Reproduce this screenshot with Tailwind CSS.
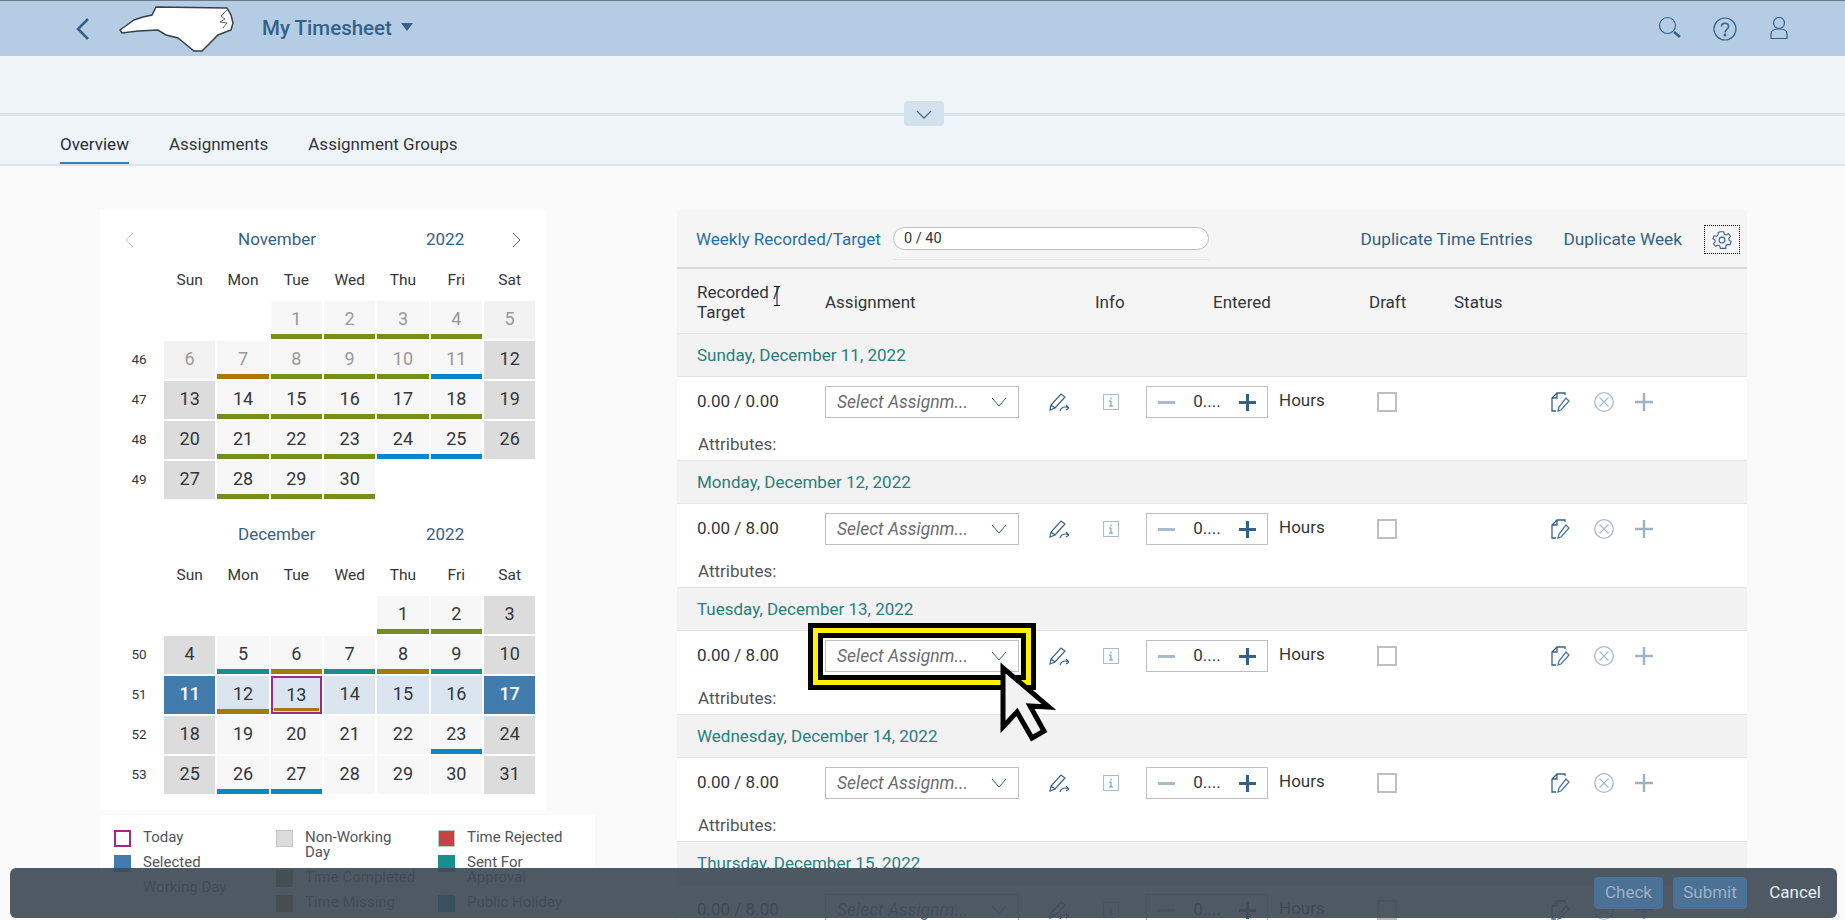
<!doctype html>
<html><head><meta charset="utf-8"><script src="https://cdn.jsdelivr.net/npm/@tailwindcss/browser@4"></script></head>
<body class="h-[920px] overflow-hidden relative bg-[#fafafa] text-[#32363a] font-['Roboto',sans-serif] text-[17px]">
<header class="h-14 bg-[#b4cce4] border-t border-[#6b7b88] flex items-center relative">
<svg class="ml-[75px] w-4 h-6" viewBox="0 0 16 24" fill="none" stroke="#346187" stroke-width="2.500"><path d="M13 2 3 12l10 10"/></svg>
<svg class="ml-[27px] w-[116px] h-[48px]" viewBox="118 5 116 48" fill="#fff" stroke="#3a3f44" stroke-width="1.500"><path d="M120 30l7-5 7-5 9-3 9-2 4-8 71 1 4 7 2 8-2 7-13 5-8 8-8 8h-8l-16-13-12-3-8-5-20 1-16 2z"/><path stroke-width=".8" fill="none" d="M227 10l-6 6 4 3-5 3 7 1-4 5"/></svg>
<span class="ml-[28px] -mt-[1px] text-[20.5px] font-medium text-[#346187]">My Timesheet</span>
<svg class="ml-[9px] -mt-[3px] w-3 h-2" viewBox="0 0 12 8" fill="#346187"><path d="M0 0h12L6 8z"/></svg>
<div class="ml-auto mr-[54px] flex items-center">
<svg class="w-6 h-6 -mt-[1px]" viewBox="0 0 24 24" fill="none" stroke="#346187" stroke-width="1.200"><circle cx="9.500" cy="9.500" r="8"/><path stroke-width="2.500" d="M16 16l6 5"/></svg>
<svg class="ml-[31px] w-6 h-6" viewBox="0 0 24 24" fill="none" stroke="#346187" stroke-width="1.200"><circle cx="12" cy="12" r="11"/><path stroke-width="1.500" d="M8.500 9.500C8.500 5 15.500 5 15.500 9.500c0 3-3.500 3-3.500 6"/><circle cx="12" cy="18" r=".8" fill="#346187"/></svg>
<svg class="ml-[30px] w-6 h-6" viewBox="0 0 24 24" fill="none" stroke="#346187" stroke-width="1.200"><circle cx="12" cy="6" r="5.500"/><path d="M4 21.500v-5c0-6 16-6 16 0v5z"/></svg>
</div></header>
<section class="h-[57px] bg-[#eff4f9] relative"><button class="absolute left-[904px] top-[45px] w-10 h-[25px] bg-[#d3e1ee] rounded-sm flex items-center justify-center"><svg class="w-4 h-3" viewBox="0 0 16 12" fill="none" stroke="#4a6f96" stroke-width="1.300"><path d="M1 3l7 7 7-7"/></svg></button></section>
<nav class="h-[53px] bg-[#eff4f9] border-t-[3px] border-b-2 border-[#d8e4ef] flex gap-[40px] pl-[60px] text-[#32363a]">
<a class="h-[48px] pt-[16px] border-b-2 border-[#427cac] -mb-0.5 text-[#1d2d3e]">Overview</a><a class="pt-[16px]">Assignments</a><a class="pt-[16px]">Assignment Groups</a></nav>
<main class="flex items-start h-[754px] overflow-hidden">
<aside class="w-[495px] ml-[100px] pt-[44px]">
<div class="w-[446px] h-[600px] bg-white pt-[14px]">
<div class="relative h-[32px] flex items-center text-[#346187] text-[17px]"><svg class="absolute left-[24px] w-3 h-4" viewBox="0 0 12 16" fill="none" stroke="#bfc7ce"><path d="M9 1 2 8l7 7"/></svg><span class="absolute left-[138px]">November</span><span class="absolute left-[326px]">2022</span><svg class="absolute left-[410px] w-3 h-4" viewBox="0 0 12 16" fill="none" stroke="#346187"><path d="M3 1l7 7-7 7"/></svg></div>
<div class="grid grid-cols-[62px_repeat(7,51.33px)] grid-rows-[39px] gap-[2px] auto-rows-[38px] mt-[4px] text-center text-[18px] leading-[24px]">
<span></span><b class="font-normal text-[15.5px] self-center">Sun</b><b class="font-normal text-[15.5px] self-center">Mon</b><b class="font-normal text-[15.5px] self-center">Tue</b><b class="font-normal text-[15.5px] self-center">Wed</b><b class="font-normal text-[15.5px] self-center">Thu</b><b class="font-normal text-[15.5px] self-center">Fri</b><b class="font-normal text-[15.5px] self-center">Sat</b>
<span></span><span></span><span></span>
<div class="bg-[#f7f7f7] text-[#999] border-b-[5px] border-[#748f1f] pt-[6px]">1</div><div class="bg-[#f7f7f7] text-[#999] border-b-[5px] border-[#748f1f] pt-[6px]">2</div><div class="bg-[#f7f7f7] text-[#999] border-b-[5px] border-[#748f1f] pt-[6px]">3</div><div class="bg-[#f7f7f7] text-[#999] border-b-[5px] border-[#748f1f] pt-[6px]">4</div><div class="bg-[#f2f2f2] text-[#999] pt-[6px]">5</div>
<span class="self-center text-[13.5px] pl-[16px] -mt-[2px]">46</span><div class="bg-[#f2f2f2] text-[#999] pt-[6px]">6</div><div class="bg-[#f7f7f7] text-[#999] border-b-[5px] border-[#a9780a] pt-[6px]">7</div><div class="bg-[#f7f7f7] text-[#999] border-b-[5px] border-[#748f1f] pt-[6px]">8</div><div class="bg-[#f7f7f7] text-[#999] border-b-[5px] border-[#748f1f] pt-[6px]">9</div><div class="bg-[#f7f7f7] text-[#999] border-b-[5px] border-[#748f1f] pt-[6px]">10</div><div class="bg-[#f7f7f7] text-[#999] border-b-[5px] border-[#0a87c5] pt-[6px]">11</div><div class="bg-[#dcdcdc] pt-[6px]">12</div>
<span class="self-center text-[13.5px] pl-[16px] -mt-[2px]">47</span><div class="bg-[#dcdcdc] pt-[6px]">13</div><div class="bg-[#f7f7f7] border-b-[5px] border-[#748f1f] pt-[6px]">14</div><div class="bg-[#f7f7f7] border-b-[5px] border-[#748f1f] pt-[6px]">15</div><div class="bg-[#f7f7f7] border-b-[5px] border-[#748f1f] pt-[6px]">16</div><div class="bg-[#f7f7f7] border-b-[5px] border-[#748f1f] pt-[6px]">17</div><div class="bg-[#f7f7f7] border-b-[5px] border-[#748f1f] pt-[6px]">18</div><div class="bg-[#dcdcdc] pt-[6px]">19</div>
<span class="self-center text-[13.5px] pl-[16px] -mt-[2px]">48</span><div class="bg-[#dcdcdc] pt-[6px]">20</div><div class="bg-[#f7f7f7] border-b-[5px] border-[#748f1f] pt-[6px]">21</div><div class="bg-[#f7f7f7] border-b-[5px] border-[#748f1f] pt-[6px]">22</div><div class="bg-[#f7f7f7] border-b-[5px] border-[#748f1f] pt-[6px]">23</div><div class="bg-[#f7f7f7] border-b-[5px] border-[#0a87c5] pt-[6px]">24</div><div class="bg-[#f7f7f7] border-b-[5px] border-[#0a87c5] pt-[6px]">25</div><div class="bg-[#dcdcdc] pt-[6px]">26</div>
<span class="self-center text-[13.5px] pl-[16px] -mt-[2px]">49</span><div class="bg-[#dcdcdc] pt-[6px]">27</div><div class="bg-[#f7f7f7] border-b-[5px] border-[#748f1f] pt-[6px]">28</div><div class="bg-[#f7f7f7] border-b-[5px] border-[#748f1f] pt-[6px]">29</div><div class="bg-[#f7f7f7] border-b-[5px] border-[#748f1f] pt-[6px]">30</div>
</div>
<div class="relative h-[32px] mt-[20px] flex items-center text-[#346187] text-[17px]"><span class="absolute left-[138px]">December</span><span class="absolute left-[326px]">2022</span></div>
<div class="grid grid-cols-[62px_repeat(7,51.33px)] grid-rows-[39px] gap-[2px] auto-rows-[38px] mt-[4px] text-center text-[18px] leading-[24px]">
<span></span><b class="font-normal text-[15.5px] self-center">Sun</b><b class="font-normal text-[15.5px] self-center">Mon</b><b class="font-normal text-[15.5px] self-center">Tue</b><b class="font-normal text-[15.5px] self-center">Wed</b><b class="font-normal text-[15.5px] self-center">Thu</b><b class="font-normal text-[15.5px] self-center">Fri</b><b class="font-normal text-[15.5px] self-center">Sat</b>
<span></span><span></span><span></span><span></span><span></span>
<div class="bg-[#f7f7f7] border-b-[5px] border-[#748f1f] pt-[6px]">1</div><div class="bg-[#f7f7f7] border-b-[5px] border-[#748f1f] pt-[6px]">2</div><div class="bg-[#dcdcdc] pt-[6px]">3</div>
<span class="self-center text-[13.5px] pl-[16px] -mt-[2px]">50</span><div class="bg-[#dcdcdc] pt-[6px]">4</div><div class="bg-[#f7f7f7] border-b-[5px] border-[#16908a] pt-[6px]">5</div><div class="bg-[#f7f7f7] border-b-[5px] border-[#a9780a] pt-[6px]">6</div><div class="bg-[#f7f7f7] border-b-[5px] border-[#16908a] pt-[6px]">7</div><div class="bg-[#f7f7f7] border-b-[5px] border-[#a9780a] pt-[6px]">8</div><div class="bg-[#f7f7f7] border-b-[5px] border-[#16908a] pt-[6px]">9</div><div class="bg-[#dcdcdc] pt-[6px]">10</div>
<span class="self-center text-[13.5px] pl-[16px] -mt-[2px]">51</span><div class="bg-[#427cac] text-white font-medium pt-[6px]">11</div><div class="bg-[#dae5f0] border-b-[5px] border-[#a9780a] pt-[6px]">12</div><div class="bg-[#dae5f0] border-2 border-[#a0288a] pt-[5px] relative">13<span class="absolute left-[1px] right-[1px] bottom-[1px] h-[3px] bg-[#a9780a]"></span></div><div class="bg-[#dae5f0] pt-[6px]">14</div><div class="bg-[#dae5f0] pt-[6px]">15</div><div class="bg-[#dae5f0] pt-[6px]">16</div><div class="bg-[#427cac] text-white font-medium pt-[6px]">17</div>
<span class="self-center text-[13.5px] pl-[16px] -mt-[2px]">52</span><div class="bg-[#dcdcdc] pt-[6px]">18</div><div class="bg-[#f7f7f7] pt-[6px]">19</div><div class="bg-[#f7f7f7] pt-[6px]">20</div><div class="bg-[#f7f7f7] pt-[6px]">21</div><div class="bg-[#f7f7f7] pt-[6px]">22</div><div class="bg-[#f7f7f7] border-b-[5px] border-[#0a87c5] pt-[6px]">23</div><div class="bg-[#dcdcdc] pt-[6px]">24</div>
<span class="self-center text-[13.5px] pl-[16px] -mt-[2px]">53</span><div class="bg-[#dcdcdc] pt-[6px]">25</div><div class="bg-[#f7f7f7] border-b-[5px] border-[#0a87c5] pt-[6px]">26</div><div class="bg-[#f7f7f7] border-b-[5px] border-[#0a87c5] pt-[6px]">27</div><div class="bg-[#f7f7f7] pt-[6px]">28</div><div class="bg-[#f7f7f7] pt-[6px]">29</div><div class="bg-[#f7f7f7] pt-[6px]">30</div><div class="bg-[#dcdcdc] pt-[6px]">31</div>
</div></div>
<div class="mt-[5px] h-[100px] bg-white pt-[15px] pl-[14px] grid grid-cols-[162px_162px_1fr] text-[15px] leading-[15px] text-[#515559]">
<div class="flex flex-col gap-[8px]"><div class="flex gap-[12px] h-[17px]"><i class="w-[17px] h-[17px] border-2 border-[#a0288a]"></i>Today</div><div class="flex gap-[12px] h-[17px]"><i class="w-[17px] h-[17px] bg-[#427cac]"></i>Selected</div><div class="flex gap-[12px] h-[17px]"><i class="w-[17px] h-[17px] bg-[#f5f5f5]"></i>Working Day</div></div>
<div class="flex flex-col gap-[8px]"><div class="flex gap-[12px] h-[32px]"><i class="w-[17px] h-[17px] bg-[#dcdcdc] border border-[#c4c4c4] shrink-0"></i><span>Non-Working<br>Day</span></div><div class="flex gap-[12px] h-[17px]"><i class="w-[17px] h-[17px] bg-[#748f1f]"></i>Time Completed</div><div class="flex gap-[12px] h-[17px]"><i class="w-[17px] h-[17px] bg-[#a9780a]"></i>Time Missing</div></div>
<div class="flex flex-col gap-[8px]"><div class="flex gap-[12px] h-[17px]"><i class="w-[17px] h-[17px] bg-[#c44343] border border-[#c4c4c4]"></i>Time Rejected</div><div class="flex gap-[12px] h-[32px]"><i class="w-[17px] h-[17px] bg-[#16908a] shrink-0"></i><span>Sent For<br>Approval</span></div><div class="flex gap-[12px] h-[17px]"><i class="w-[17px] h-[17px] bg-[#0a87c5]"></i>Public Holiday</div></div>
</div></aside>
<section class="ml-[82px] w-[1070px] mt-[44px]">
<div class="h-[59px] bg-[#f5f5f5] border-b-2 border-[#d9d9d9] flex items-center pl-[19px] pr-[7px] pt-[2px] relative">
<span class="text-[#1f6fa8] w-[197px]">Weekly Recorded/Target</span>
<div class="w-[316px] h-[23px] -mt-[2px] bg-white rounded-full border border-[#bfbfbf] pl-[10px] text-[14.5px] leading-[21px]">0 / 40</div>
<span class="absolute left-[216px] top-[49px] w-[316px] h-px bg-[#e5e5e5]"></span>
<a class="ml-auto text-[#346187] text-[17.25px]">Duplicate Time Entries</a><a class="ml-[31px] text-[#346187] text-[17.25px]">Duplicate Week</a>
<button class="ml-[22px] w-[36px] h-[29px] border border-dotted border-black flex items-center justify-center"><svg class="w-5 h-5" viewBox="0 0 24 24" fill="none" stroke="#346187" stroke-width="1.300"><circle cx="12" cy="12" r="3.500"/><path d="M10 2h4l.7 3 2.300 1 2.700-1.500 2.500 3-2 2.300.3 2.400 2.500 1.800-1.500 3.800-3-.5-1.800 1.700-.2 3H10l-.7-3-2.300-1-2.700 1.500-2.500-3 2-2.300-.3-2.400L1 10.500 2.500 7l3 .5L7.300 5.800 7.500 3z"/></svg></button></div>
<div class="h-[65px] bg-[#f5f5f5] border-b border-[#e5e5e5] grid grid-cols-[128px_270px_118px_156px_85px_1fr] pl-[20px] pt-[2px] items-center leading-[20px]"><span class="relative">Recorded /<br>Target<svg class="absolute left-[76px] top-[4px] w-[8px] h-[20px]" viewBox="0 0 8 20" fill="none" stroke="#111"><path d="M1 .5h6M4 .5v19M1 19.500h6"/></svg></span><span>Assignment</span><span>Info</span><span>Entered</span><span>Draft</span><span>Status</span></div>
<div class="h-[43px] bg-[#f2f2f2] border-b border-[#e5e5e5] pl-[20px] pt-[2px] flex items-center text-[#2b7d7d]">Sunday, December 11, 2022</div>
<div class="h-[84px] bg-white border-b border-[#e5e5e5]"><div class="flex items-center h-[50px] pl-[20px]"><span class="w-[128px]">0.00 / 0.00</span><div class="w-[194px] h-8 border border-[#bfbfbf] flex items-center justify-between px-[11px] italic text-[#6a6d70] text-[17.5px]">Select Assignm...<svg class="w-4 h-3" viewBox="0 0 16 12" fill="none" stroke="#346187"><path d="M1 2l7 8 7-8"/></svg></div><svg class="ml-[30px] w-5 h-[18px]" viewBox="0 0 20 18" fill="none" stroke="#346187" stroke-width="1.200"><path d="M1 17l1-5L12 1l4 3L6 15zM2 12l4 3M11 18c1-4 5-5 9-3M20 15l-3-3M20 15l-3 2"/></svg><svg class="ml-[34px] w-[16px] h-[16px]" viewBox="0 0 16 16" fill="none" stroke="#a9bccf"><rect x=".5" y=".5" width="15" height="15"/><path stroke="#6f93b3" d="M6 7h2v5M6 12h4M8 3.500v2"/></svg><div class="ml-[27px] w-[122px] h-8 border border-[#bfbfbf] flex items-center px-[11px] justify-between"><i class="w-[17px] h-[3px] bg-[#a9bccf]"></i><span>0....</span><svg class="w-[17px] h-[17px]" viewBox="0 0 17 17" stroke="#346187" stroke-width="3"><path d="M0 8.500h17M8.500 0v17"/></svg></div><span class="ml-[11px] -mt-[2px] w-[98px]">Hours</span><i class="w-5 h-5 border-2 border-[#bfbfbf]"></i><svg class="ml-[154px] w-5 h-5" viewBox="0 0 20 20" fill="none" stroke="#346187" stroke-width="1.300"><path d="M5 19H1V6l5-5h8v2M1 6h5V1"/><path stroke="#4a78a8" d="M7 19l1-4 7-9 3 3-8 9z"/></svg><svg class="ml-[23px] w-5 h-5" viewBox="0 0 20 20" fill="none" stroke="#a9bccf" stroke-width="1.300"><circle cx="10" cy="10" r="9.300"/><path d="M5.500 5.500l9 9M14.500 5.500l-9 9"/></svg><svg class="ml-[21px] w-[18px] h-[18px]" viewBox="0 0 18 18" stroke="#a0b3c6" stroke-width="2.500"><path d="M0 9h18M9 0v18"/></svg></div><div class="pl-[21px] text-[#515559] mt-[5px]">Attributes:</div></div>
<div class="h-[43px] bg-[#f2f2f2] border-b border-[#e5e5e5] pl-[20px] pt-[2px] flex items-center text-[#2b7d7d]">Monday, December 12, 2022</div>
<div class="h-[84px] bg-white border-b border-[#e5e5e5]"><div class="flex items-center h-[50px] pl-[20px]"><span class="w-[128px]">0.00 / 8.00</span><div class="w-[194px] h-8 border border-[#bfbfbf] flex items-center justify-between px-[11px] italic text-[#6a6d70] text-[17.5px]">Select Assignm...<svg class="w-4 h-3" viewBox="0 0 16 12" fill="none" stroke="#346187"><path d="M1 2l7 8 7-8"/></svg></div><svg class="ml-[30px] w-5 h-[18px]" viewBox="0 0 20 18" fill="none" stroke="#346187" stroke-width="1.200"><path d="M1 17l1-5L12 1l4 3L6 15zM2 12l4 3M11 18c1-4 5-5 9-3M20 15l-3-3M20 15l-3 2"/></svg><svg class="ml-[34px] w-[16px] h-[16px]" viewBox="0 0 16 16" fill="none" stroke="#a9bccf"><rect x=".5" y=".5" width="15" height="15"/><path stroke="#6f93b3" d="M6 7h2v5M6 12h4M8 3.500v2"/></svg><div class="ml-[27px] w-[122px] h-8 border border-[#bfbfbf] flex items-center px-[11px] justify-between"><i class="w-[17px] h-[3px] bg-[#a9bccf]"></i><span>0....</span><svg class="w-[17px] h-[17px]" viewBox="0 0 17 17" stroke="#346187" stroke-width="3"><path d="M0 8.500h17M8.500 0v17"/></svg></div><span class="ml-[11px] -mt-[2px] w-[98px]">Hours</span><i class="w-5 h-5 border-2 border-[#bfbfbf]"></i><svg class="ml-[154px] w-5 h-5" viewBox="0 0 20 20" fill="none" stroke="#346187" stroke-width="1.300"><path d="M5 19H1V6l5-5h8v2M1 6h5V1"/><path stroke="#4a78a8" d="M7 19l1-4 7-9 3 3-8 9z"/></svg><svg class="ml-[23px] w-5 h-5" viewBox="0 0 20 20" fill="none" stroke="#a9bccf" stroke-width="1.300"><circle cx="10" cy="10" r="9.300"/><path d="M5.500 5.500l9 9M14.500 5.500l-9 9"/></svg><svg class="ml-[21px] w-[18px] h-[18px]" viewBox="0 0 18 18" stroke="#a0b3c6" stroke-width="2.500"><path d="M0 9h18M9 0v18"/></svg></div><div class="pl-[21px] text-[#515559] mt-[5px]">Attributes:</div></div>
<div class="h-[43px] bg-[#f2f2f2] border-b border-[#e5e5e5] pl-[20px] pt-[2px] flex items-center text-[#2b7d7d]">Tuesday, December 13, 2022</div>
<div class="h-[84px] bg-white border-b border-[#e5e5e5]"><div class="flex items-center h-[50px] pl-[20px]"><span class="w-[128px]">0.00 / 8.00</span><div class="w-[194px] h-8 border border-[#bfbfbf] flex items-center justify-between px-[11px] italic text-[#6a6d70] text-[17.5px]">Select Assignm...<svg class="w-4 h-3" viewBox="0 0 16 12" fill="none" stroke="#346187"><path d="M1 2l7 8 7-8"/></svg></div><svg class="ml-[30px] w-5 h-[18px]" viewBox="0 0 20 18" fill="none" stroke="#346187" stroke-width="1.200"><path d="M1 17l1-5L12 1l4 3L6 15zM2 12l4 3M11 18c1-4 5-5 9-3M20 15l-3-3M20 15l-3 2"/></svg><svg class="ml-[34px] w-[16px] h-[16px]" viewBox="0 0 16 16" fill="none" stroke="#a9bccf"><rect x=".5" y=".5" width="15" height="15"/><path stroke="#6f93b3" d="M6 7h2v5M6 12h4M8 3.500v2"/></svg><div class="ml-[27px] w-[122px] h-8 border border-[#bfbfbf] flex items-center px-[11px] justify-between"><i class="w-[17px] h-[3px] bg-[#a9bccf]"></i><span>0....</span><svg class="w-[17px] h-[17px]" viewBox="0 0 17 17" stroke="#346187" stroke-width="3"><path d="M0 8.500h17M8.500 0v17"/></svg></div><span class="ml-[11px] -mt-[2px] w-[98px]">Hours</span><i class="w-5 h-5 border-2 border-[#bfbfbf]"></i><svg class="ml-[154px] w-5 h-5" viewBox="0 0 20 20" fill="none" stroke="#346187" stroke-width="1.300"><path d="M5 19H1V6l5-5h8v2M1 6h5V1"/><path stroke="#4a78a8" d="M7 19l1-4 7-9 3 3-8 9z"/></svg><svg class="ml-[23px] w-5 h-5" viewBox="0 0 20 20" fill="none" stroke="#a9bccf" stroke-width="1.300"><circle cx="10" cy="10" r="9.300"/><path d="M5.500 5.500l9 9M14.500 5.500l-9 9"/></svg><svg class="ml-[21px] w-[18px] h-[18px]" viewBox="0 0 18 18" stroke="#a0b3c6" stroke-width="2.500"><path d="M0 9h18M9 0v18"/></svg></div><div class="pl-[21px] text-[#515559] mt-[5px]">Attributes:</div></div>
<div class="h-[43px] bg-[#f2f2f2] border-b border-[#e5e5e5] pl-[20px] pt-[2px] flex items-center text-[#2b7d7d]">Wednesday, December 14, 2022</div>
<div class="h-[84px] bg-white border-b border-[#e5e5e5]"><div class="flex items-center h-[50px] pl-[20px]"><span class="w-[128px]">0.00 / 8.00</span><div class="w-[194px] h-8 border border-[#bfbfbf] flex items-center justify-between px-[11px] italic text-[#6a6d70] text-[17.5px]">Select Assignm...<svg class="w-4 h-3" viewBox="0 0 16 12" fill="none" stroke="#346187"><path d="M1 2l7 8 7-8"/></svg></div><svg class="ml-[30px] w-5 h-[18px]" viewBox="0 0 20 18" fill="none" stroke="#346187" stroke-width="1.200"><path d="M1 17l1-5L12 1l4 3L6 15zM2 12l4 3M11 18c1-4 5-5 9-3M20 15l-3-3M20 15l-3 2"/></svg><svg class="ml-[34px] w-[16px] h-[16px]" viewBox="0 0 16 16" fill="none" stroke="#a9bccf"><rect x=".5" y=".5" width="15" height="15"/><path stroke="#6f93b3" d="M6 7h2v5M6 12h4M8 3.500v2"/></svg><div class="ml-[27px] w-[122px] h-8 border border-[#bfbfbf] flex items-center px-[11px] justify-between"><i class="w-[17px] h-[3px] bg-[#a9bccf]"></i><span>0....</span><svg class="w-[17px] h-[17px]" viewBox="0 0 17 17" stroke="#346187" stroke-width="3"><path d="M0 8.500h17M8.500 0v17"/></svg></div><span class="ml-[11px] -mt-[2px] w-[98px]">Hours</span><i class="w-5 h-5 border-2 border-[#bfbfbf]"></i><svg class="ml-[154px] w-5 h-5" viewBox="0 0 20 20" fill="none" stroke="#346187" stroke-width="1.300"><path d="M5 19H1V6l5-5h8v2M1 6h5V1"/><path stroke="#4a78a8" d="M7 19l1-4 7-9 3 3-8 9z"/></svg><svg class="ml-[23px] w-5 h-5" viewBox="0 0 20 20" fill="none" stroke="#a9bccf" stroke-width="1.300"><circle cx="10" cy="10" r="9.300"/><path d="M5.500 5.500l9 9M14.500 5.500l-9 9"/></svg><svg class="ml-[21px] w-[18px] h-[18px]" viewBox="0 0 18 18" stroke="#a0b3c6" stroke-width="2.500"><path d="M0 9h18M9 0v18"/></svg></div><div class="pl-[21px] text-[#515559] mt-[5px]">Attributes:</div></div>
<div class="h-[43px] bg-[#f2f2f2] border-b border-[#e5e5e5] pl-[20px] pt-[2px] flex items-center text-[#2b7d7d]">Thursday, December 15, 2022</div>
<div class="h-[84px] bg-white"><div class="flex items-center h-[50px] pl-[20px]"><span class="w-[128px]">0.00 / 8.00</span><div class="w-[194px] h-8 border border-[#bfbfbf] flex items-center justify-between px-[11px] italic text-[#6a6d70] text-[17.5px]">Select Assignm...<svg class="w-4 h-3" viewBox="0 0 16 12" fill="none" stroke="#346187"><path d="M1 2l7 8 7-8"/></svg></div><svg class="ml-[30px] w-5 h-[18px]" viewBox="0 0 20 18" fill="none" stroke="#346187" stroke-width="1.200"><path d="M1 17l1-5L12 1l4 3L6 15zM2 12l4 3M11 18c1-4 5-5 9-3M20 15l-3-3M20 15l-3 2"/></svg><svg class="ml-[34px] w-[16px] h-[16px]" viewBox="0 0 16 16" fill="none" stroke="#a9bccf"><rect x=".5" y=".5" width="15" height="15"/><path stroke="#6f93b3" d="M6 7h2v5M6 12h4M8 3.500v2"/></svg><div class="ml-[27px] w-[122px] h-8 border border-[#bfbfbf] flex items-center px-[11px] justify-between"><i class="w-[17px] h-[3px] bg-[#a9bccf]"></i><span>0....</span><svg class="w-[17px] h-[17px]" viewBox="0 0 17 17" stroke="#346187" stroke-width="3"><path d="M0 8.500h17M8.500 0v17"/></svg></div><span class="ml-[11px] -mt-[2px] w-[98px]">Hours</span><i class="w-5 h-5 border-2 border-[#bfbfbf]"></i><svg class="ml-[154px] w-5 h-5" viewBox="0 0 20 20" fill="none" stroke="#346187" stroke-width="1.300"><path d="M5 19H1V6l5-5h8v2M1 6h5V1"/><path stroke="#4a78a8" d="M7 19l1-4 7-9 3 3-8 9z"/></svg><svg class="ml-[23px] w-5 h-5" viewBox="0 0 20 20" fill="none" stroke="#a9bccf" stroke-width="1.300"><circle cx="10" cy="10" r="9.300"/><path d="M5.500 5.500l9 9M14.500 5.500l-9 9"/></svg><svg class="ml-[21px] w-[18px] h-[18px]" viewBox="0 0 18 18" stroke="#a0b3c6" stroke-width="2.500"><path d="M0 9h18M9 0v18"/></svg></div></div>
</section></main>
<div class="absolute left-[808px] top-[623px] w-[228px] h-[67px] border-[5px] border-black pointer-events-none"><div class="w-full h-full border-[5px] border-[#fff200]"><div class="w-full h-full border-[5px] border-black"></div></div></div>
<svg class="absolute left-[995px] top-[655px] w-[70px] h-[95px]" viewBox="995 655 70 95" fill="#f2f2f2" stroke="#000" stroke-width="5"><path d="M1003 668v59l14-15 15 26 12-7-14-25 19 1z"/></svg>
<footer class="absolute left-[10px] top-[868px] w-[1827px] h-[50px] rounded-md bg-[#3f4b57]/92 flex items-center justify-end pr-4 gap-[10px]">
<button class="w-[69px] h-8 rounded bg-[#4b7196] text-[#9fb0c0]">Check</button><button class="w-[74px] h-8 rounded bg-[#4b7196] text-[#9fb0c0]">Submit</button><button class="ml-[11px] w-[53px] text-[#e8eef3] whitespace-nowrap text-right">Cancel</button></footer>
</body></html>
